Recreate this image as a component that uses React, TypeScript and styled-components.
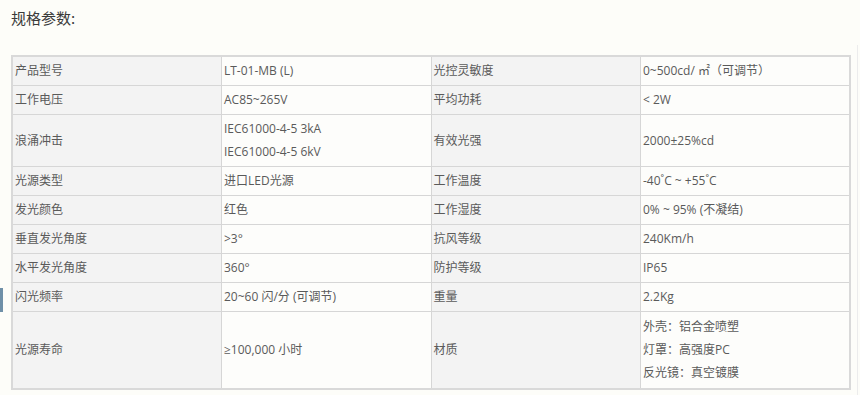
import React from "react";
import styled, { createGlobalStyle } from "styled-components";

const Global = createGlobalStyle`
  html, body { margin: 0; padding: 0; background: #fdfdf9; }
  body { font-family: "Open Sans", "Noto Sans CJK SC", sans-serif; overflow: hidden; }
`;

const Page = styled.div`
  position: relative;
  width: 860px;
  height: 395px;
  padding: 8px 10px 0 11px;
  box-sizing: border-box;
`;

const Title = styled.h3`
  margin: 0 0 27px 0;
  font-size: 15px;
  font-weight: normal;
  color: #3a3a3a;
  line-height: 20px;
  font-family: "Noto Sans CJK SC", sans-serif;
`;

const Table = styled.table`
  width: 840px;
  border-collapse: collapse;
  border: 2px solid #d9d9d9;
  table-layout: fixed;
`;

const Row = styled.tr<{ $h?: number }>`
  height: ${(p) => (p.$h ? `${p.$h}px` : "auto")};
`;

const Cell = styled.td<{ $label?: boolean }>`
  border: 1px solid #d6d6d6;
  background: ${(p) => (p.$label ? "#f3f3f3" : "#fdfdfb")};
  padding: 2px 4px 3px 2px;
  font-size: 12px;
  line-height: 23px;
  color: #5a5a5a;
  vertical-align: middle;
`;

const Line = styled.div`
  line-height: 23px;
`;

const SideTab = styled.div`
  position: absolute;
  left: 0;
  top: 288px;
  width: 3px;
  height: 24px;
  background: #6f90a8;
`;

const ScrollEdge = styled.div`
  position: absolute;
  right: 2px;
  top: 45px;
  width: 1px;
  height: 350px;
  background: #ececec;
`;

type RowData = [string, string[], string, string[]];

const rows: RowData[] = [
  ["产品型号", ["LT-01-MB (L)"], "光控灵敏度", ["0~500cd/ ㎡（可调节）"]],
  ["工作电压", ["AC85~265V"], "平均功耗", ["< 2W"]],
  ["浪涌冲击", ["IEC61000-4-5 3kA", "IEC61000-4-5 6kV"], "有效光强", ["2000±25%cd"]],
  ["光源类型", ["进口LED光源"], "工作温度", ["-40˚C ~ +55˚C"]],
  ["发光颜色", ["红色"], "工作湿度", ["0% ~ 95% (不凝结)"]],
  ["垂直发光角度", [">3°"], "抗风等级", ["240Km/h"]],
  ["水平发光角度", ["360°"], "防护等级", ["IP65"]],
  ["闪光频率", ["20~60 闪/分 (可调节)"], "重量", ["2.2Kg"]],
  ["光源寿命", ["≥100,000 小时"], "材质", ["外壳：铝合金喷塑", "灯罩：高强度PC", "反光镜：真空镀膜"]],
];

export default function App() {
  return (
    <>
      <Global />
      <Page>
        <Title>规格参数:</Title>
        <Table>
          <tbody>
            {rows.map((r, i) => (
              <Row key={i} $h={i === rows.length - 1 ? 77 : undefined}>
                <Cell $label>{r[0]}</Cell>
                <Cell>
                  {r[1].map((t, j) => (
                    <Line key={j}>{t}</Line>
                  ))}
                </Cell>
                <Cell $label>{r[2]}</Cell>
                <Cell>
                  {r[3].map((t, j) => (
                    <Line key={j}>{t}</Line>
                  ))}
                </Cell>
              </Row>
            ))}
          </tbody>
        </Table>
        <SideTab />
        <ScrollEdge />
      </Page>
    </>
  );
}
